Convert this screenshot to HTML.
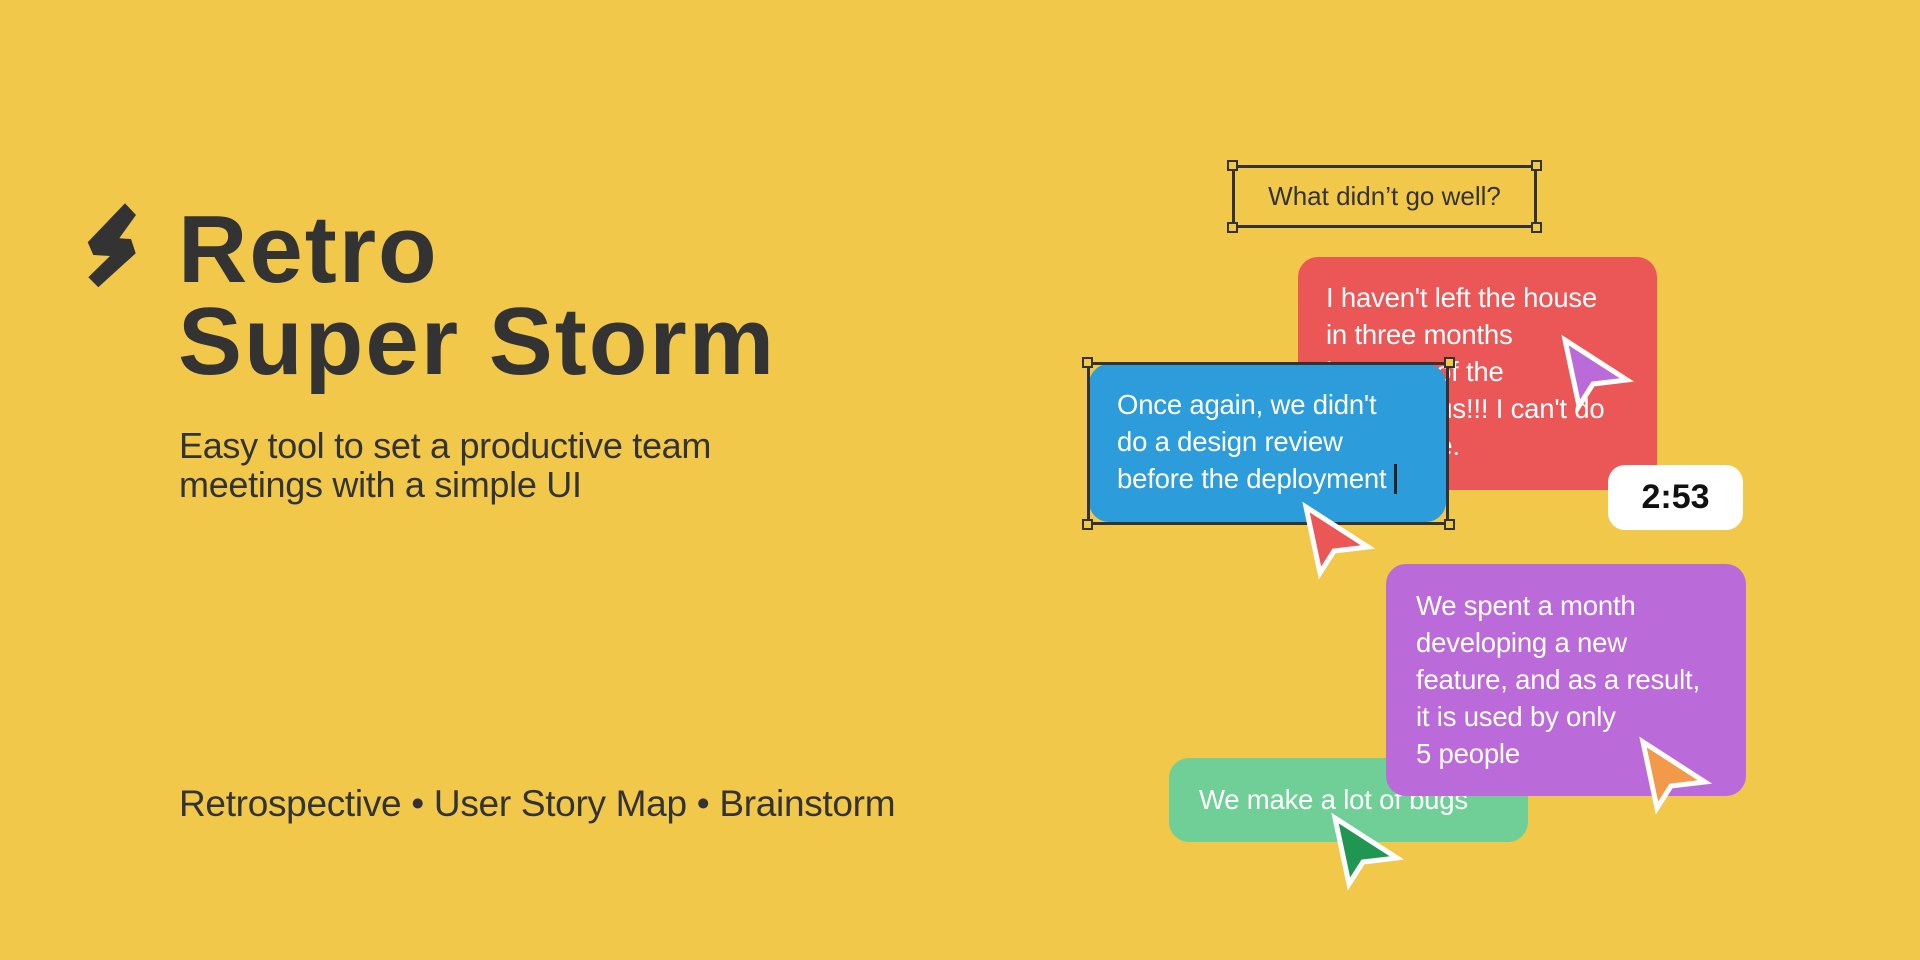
<!DOCTYPE html>
<html><head><meta charset="utf-8"><style>
html,body{margin:0;padding:0}
body{width:1920px;height:960px;background:#F2C84B;position:relative;overflow:hidden;font-family:"Liberation Sans",sans-serif;color:#333}
.a{position:absolute}
.title{left:178px;top:204px;font-size:96px;font-weight:bold;line-height:92px;letter-spacing:2px;color:#333}
.sub{left:179px;top:426px;font-size:36px;line-height:39px;letter-spacing:-0.3px}
.bot{left:179px;top:784px;font-size:37px;line-height:40px;letter-spacing:-0.3px}
.card{position:absolute;border-radius:20px;color:#fff;font-size:27.5px;line-height:37px;box-sizing:border-box;letter-spacing:-0.2px}
.h{position:absolute;width:7px;height:7px;border:2px solid #333;background:#F2C84B}
</style></head><body>
<svg class="a" style="left:0;top:0" width="200" height="320"><polygon points="125,203.3 136,215 119.3,238.3 131,239 135.7,253.3 98.3,287.3 88.3,277.3 110,256 93.3,255 87.7,242.3" fill="#333"/></svg>
<div class="a title">Retro<br>Super Storm</div>
<div class="a sub">Easy tool to set a productive team<br>meetings with a simple UI</div>
<div class="a bot">Retrospective • User Story Map • Brainstorm</div>

<div class="a" style="left:1232px;top:165px;width:305px;height:63px;border:3px solid #333;box-sizing:border-box;font-size:26px;line-height:57px;text-align:center">What didn’t go well?</div>
<div class="h" style="left:1227px;top:160px"></div><div class="h" style="left:1531px;top:160px"></div>
<div class="h" style="left:1227px;top:222px"></div><div class="h" style="left:1531px;top:222px"></div>

<div class="card" style="left:1298px;top:257px;width:359px;height:233px;background:#EB5757;padding:22px 0 0 28px">I haven't left the house<br>in three months<br>because of the<br>coronavirus!!! I can't do<br>it anymore.</div>

<div class="card" style="left:1089px;top:364px;width:357px;height:158px;background:#2D9CDB;padding:22px 0 0 28px">Once again, we didn't<br>do a design review<br>before the deployment <span style="display:inline-block;width:3px;height:30px;background:#222;vertical-align:-6px"></span></div>
<div class="a" style="left:1087px;top:362px;width:362px;height:163px;border:3px solid #333;box-sizing:border-box"></div>
<div class="h" style="left:1082px;top:357px"></div><div class="h" style="left:1444px;top:357px"></div>
<div class="h" style="left:1082px;top:519px"></div><div class="h" style="left:1444px;top:519px"></div>

<div class="a" style="left:1608px;top:465px;width:135px;height:65px;background:#fff;border-radius:17px;font-size:34px;font-weight:bold;color:#111;text-align:center;line-height:65px">2:53</div>

<div class="card" style="left:1169px;top:758px;width:359px;height:84px;background:#6FCF97;padding:0 0 0 30px;line-height:84px">We make a lot of bugs</div>
<div class="card" style="left:1386px;top:564px;width:360px;height:232px;background:#BB6BD9;padding:23px 0 0 30px">We spent a month<br>developing a new<br>feature, and as a result,<br>it is used by only<br>5 people</div>

<svg class="a" style="left:0;top:0" width="1920" height="960">
<g stroke="#fff" stroke-width="5" stroke-linejoin="miter">
<polygon transform="translate(1565,340)" points="0,0 62,40 28,44 14,66" fill="#BB6BD9"/>
<polygon transform="translate(1306,507)" points="0,0 62,40 28,44 14,66" fill="#EB5757"/>
<polygon transform="translate(1643,742)" points="0,0 62,40 28,44 14,66" fill="#F2994A"/>
<polygon transform="translate(1335,818)" points="0,0 62,40 28,44 14,66" fill="#219653"/>
</g></svg>
</body></html>
